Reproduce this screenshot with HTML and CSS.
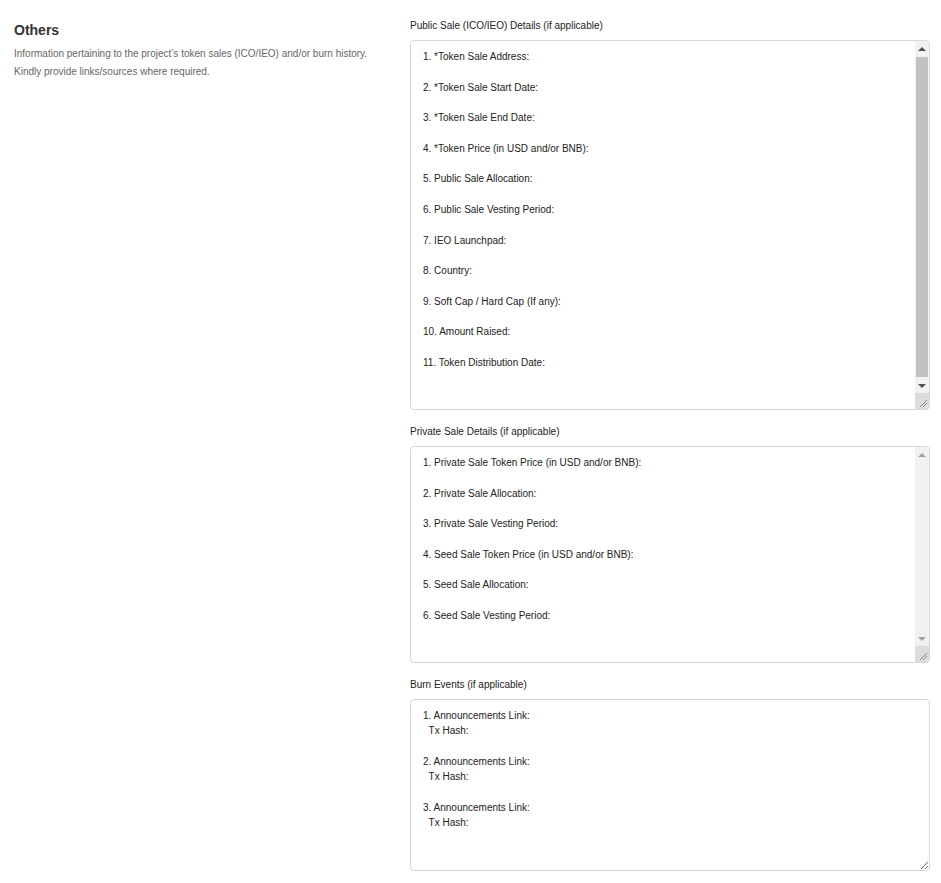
FILE: index.html
```html
<!DOCTYPE html>
<html lang="en">
<head>
    <meta charset="utf-8">
    <meta name="viewport" content="width=device-width, initial-scale=1.0">
    <title>Others</title>
    <link rel="stylesheet" href="styles.css">
</head>

<body>
    <section class="others">
        <div class="intro">
            <h2>Others</h2>
            <p>Information pertaining to the project’s token sales (ICO/IEO) and/or burn history.<br>Kindly provide links/sources where required.</p>
        </div>

        <div class="felter">
            <label for="public">Public Sale (ICO/IEO) Details (if applicable)</label>
            <div class="boks">
                <textarea id="public" class="felt felt-public">1. *Token Sale Address:

2. *Token Sale Start Date:

3. *Token Sale End Date:

4. *Token Price (in USD and/or BNB):

5. Public Sale Allocation:

6. Public Sale Vesting Period:

7. IEO Launchpad:

8. Country:

9. Soft Cap / Hard Cap (If any):

10. Amount Raised:

11. Token Distribution Date:</textarea>
                <div class="scrollbar">
                    <div class="pil">
                        <svg width="8" height="4"><polygon points="0,4 8,4 4,0" fill="#505050"/></svg>
                    </div>
                    <div class="spor"><div class="thumb"></div></div>
                    <div class="pil">
                        <svg width="8" height="4"><polygon points="0,0 8,0 4,4" fill="#505050"/></svg>
                    </div>
                    <div class="hjorne">
                        <svg width="10" height="10"><path d="M9 2 L2 9 M9 5 L5 9" stroke="#8a8a8a" stroke-width="1"/></svg>
                    </div>
                </div>
            </div>

            <label for="private">Private Sale Details (if applicable)</label>
            <div class="boks">
                <textarea id="private" class="felt felt-private">1. Private Sale Token Price (in USD and/or BNB):

2. Private Sale Allocation:

3. Private Sale Vesting Period:

4. Seed Sale Token Price (in USD and/or BNB):

5. Seed Sale Allocation:

6. Seed Sale Vesting Period:</textarea>
                <div class="scrollbar">
                    <div class="pil">
                        <svg width="8" height="4"><polygon points="0,4 8,4 4,0" fill="#a3a3a3"/></svg>
                    </div>
                    <div class="spor"></div>
                    <div class="pil">
                        <svg width="8" height="4"><polygon points="0,0 8,0 4,4" fill="#a3a3a3"/></svg>
                    </div>
                    <div class="hjorne">
                        <svg width="10" height="10"><path d="M9 2 L2 9 M9 5 L5 9" stroke="#8a8a8a" stroke-width="1"/></svg>
                    </div>
                </div>
            </div>

            <label for="burn">Burn Events (if applicable)</label>
            <div class="boks">
                <textarea id="burn" class="felt felt-burn">1. Announcements Link:
  Tx Hash:

2. Announcements Link:
  Tx Hash:

3. Announcements Link:
  Tx Hash:</textarea>
            </div>
        </div>
    </section>
</body></html>
```

FILE: styles.css
```css
body {
    margin: 0;
    background-color: #fff;
    font-family: 'Liberation Sans', Arial, sans-serif;
    color: #222;
}

.others {
    display: grid;
    grid-template-columns: 396px 520px;
    padding: 19px 11px 0 14px;
}

h2 {
    font-size: 14px;
    font-weight: bold;
    color: #333;
    margin: 3px 0 7px 0;
    line-height: 16px;
}

.intro p {
    font-size: 10px;
    line-height: 18px;
    color: #666;
    margin: 0;
}

.felter {
    display: flex;
    flex-direction: column;
}

label {
    font-size: 10px;
    line-height: 14px;
    color: #222;
    margin-bottom: 7px;
}

.boks {
    position: relative;
    margin-bottom: 15px;
}

.felt {
    display: block;
    box-sizing: border-box;
    width: 520px;
    padding: 8px 12px;
    border: 1px solid #d5d8df;
    border-radius: 4px;
    font-family: 'Liberation Sans', Arial, sans-serif;
    font-size: 10px;
    line-height: 15.3px;
    color: #222;
    margin: 0;
    resize: vertical;
    outline: none;
}

.felt-public {
    height: 370px;
}

.felt-private {
    height: 217px;
}

.felt-burn {
    height: 172px;
}

/* tegnet scrollbar oven på feltet */
.scrollbar {
    position: absolute;
    top: 1px;
    right: 1px;
    bottom: 1px;
    width: 14px;
    display: flex;
    flex-direction: column;
    background-color: #f1f1f1;
    border-radius: 0 3px 3px 0;
    overflow: hidden;
}

.pil {
    height: 15px;
    display: flex;
    align-items: center;
    justify-content: center;
}

.spor {
    flex: 1;
    display: flex;
    padding: 1px 1px;
}

.thumb {
    flex: 1;
    background-color: #c1c1c1;
}

.hjorne {
    height: 15px;
    background-color: #dcdcdc;
    display: flex;
    align-items: flex-end;
    justify-content: flex-end;
    padding: 0 1px 1px 0;
}
```
